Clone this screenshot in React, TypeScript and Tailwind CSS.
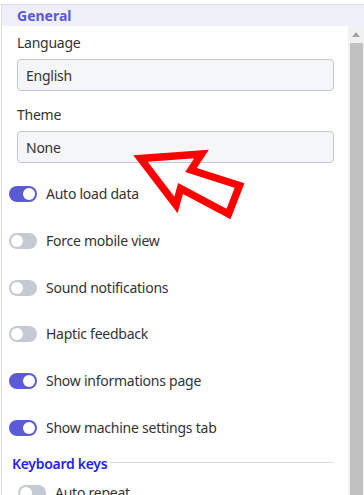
import React from "react";

const font = { fontFamily: '"Noto Sans", "Open Sans", sans-serif' };

function Toggle({ on }: { on: boolean }) {
  return (
    <div
      className={
        "relative w-[28px] h-[16px] rounded-full shrink-0 " +
        (on ? "bg-[#5b5bd6]" : "bg-[#c5c9d3]")
      }
    >
      <div
        className={
          "absolute top-[2px] w-[12px] h-[12px] rounded-full bg-white " +
          (on ? "left-[14px]" : "left-[2px]")
        }
      />
    </div>
  );
}

function ToggleRow({ on, label }: { on: boolean; label: string }) {
  return (
    <div className="flex items-center h-[20px] gap-[9px]">
      <Toggle on={on} />
      <span className="text-[14px] text-[#333333] leading-[20px] tracking-[-0.25px]">{label}</span>
    </div>
  );
}

export default function App() {
  const rows: [boolean, string][] = [
    [true, "Auto load data"],
    [false, "Force mobile view"],
    [false, "Sound notifications"],
    [false, "Haptic feedback"],
    [true, "Show informations page"],
    [true, "Show machine settings tab"],
  ];
  return (
    <div className="relative w-[364px] h-[495px] overflow-hidden bg-white" style={font}>
      <div className="pt-[4px] pl-[1px] h-full">
        <div className="border-t border-l border-[#dcdce6] h-full flex flex-col">
          <div className="h-[21px] bg-[#efeff9] flex items-center pl-[15px] text-[14px] font-bold text-[#5a5ad6] leading-[20px]">
            General
          </div>
          <div className="flex flex-1 min-h-0">
            <div className="flex-1 min-w-0 pt-[7px]">
              <div className="pl-[15px] pr-[14px]">
                <div className="text-[14px] text-[#333333] leading-[20px] tracking-[-0.25px]">Language</div>
                <div className="mt-[6px] h-[32px] border border-[#c3c6ce] rounded-[4px] bg-[#f5f6f8] flex items-center pl-[8px] text-[14px] text-[#333333] tracking-[-0.25px]">
                  English
                </div>
                <div className="mt-[14px] text-[14px] text-[#333333] leading-[20px] tracking-[-0.25px]">Theme</div>
                <div className="mt-[6px] h-[32px] border border-[#c3c6ce] rounded-[4px] bg-[#f5f6f8] flex items-center pl-[8px] text-[14px] text-[#333333] tracking-[-0.25px]">
                  None
                </div>
              </div>
              <div className="mt-[21px] pl-[7px] flex flex-col gap-[26.8px]">
                {rows.map(([on, label]) => (
                  <ToggleRow key={label} on={on} label={label} />
                ))}
              </div>
              <div className="mt-[16px] pl-[10px] pr-[14px] flex items-center gap-[3px] h-[20px]">
                <span className="text-[14px] font-semibold text-[#1f1ff0] leading-[20px] tracking-[-0.3px]">
                  Keyboard keys
                </span>
                <div className="flex-1 h-px bg-[#dcdce0] mb-[2px]" />
              </div>
              <div className="mt-[9px] pl-[16px]">
                <ToggleRow on={false} label="Auto repeat" />
              </div>
            </div>
            <div className="w-[16px] bg-[#f1f1f1] flex flex-col shrink-0">
              <div className="h-[17px] flex items-center justify-center">
                <svg width="8" height="5" viewBox="0 0 8 5">
                  <polygon points="4,0 8,5 0,5" fill="#a3a3a3" />
                </svg>
              </div>
              <div className="flex-1 ml-[2px] mr-[1px] bg-[#c1c1c1]" />
            </div>
          </div>
        </div>
      </div>
      <svg
        className="absolute left-0 top-0 pointer-events-none"
        width="364"
        height="495"
        viewBox="0 0 364 495"
      >
        <polygon
          points="140.5,158.5 201.5,154 191,170 239.5,185.5 228.5,214 180.5,188.5 176,205"
          fill="none"
          stroke="#ff0000"
          strokeWidth="7.5"
          strokeLinejoin="miter"
          strokeMiterlimit="2.5"
        />
      </svg>
    </div>
  );
}
